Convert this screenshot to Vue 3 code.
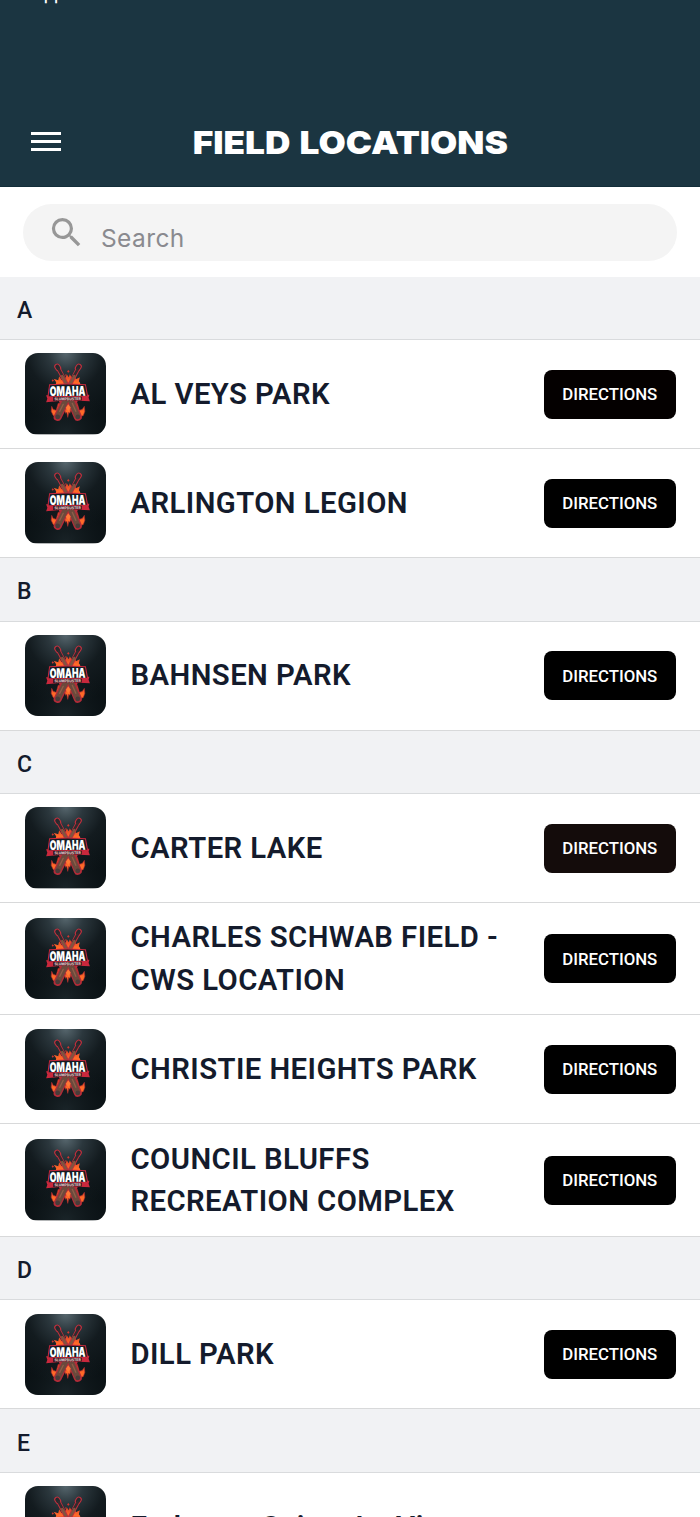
<script setup>
import { ref } from 'vue'

const search = ref('')

const sections = [
	{
		letter: 'A',
		fields: [{ name: 'AL VEYS PARK', tone: 'warm' }, { name: 'ARLINGTON LEGION' }],
	},
	{
		letter: 'B',
		fields: [{ name: 'BAHNSEN PARK' }],
	},
	{
		letter: 'C',
		fields: [
			{ name: 'CARTER LAKE', tone: 'pressed' },
			{ name: 'CHARLES SCHWAB FIELD - CWS LOCATION', tall: true },
			{ name: 'CHRISTIE HEIGHTS PARK' },
			{ name: 'COUNCIL BLUFFS RECREATION COMPLEX', tall: true },
		],
	},
	{
		letter: 'D',
		fields: [{ name: 'DILL PARK' }],
	},
	{
		letter: 'E',
		fields: [{ name: 'Embassy Suites La Vista', plain: true }],
	},
]
</script>

<template>
	<div class="screen">
		<header class="top-bar">
			<div class="status">App Screenshots</div>
			<div class="nav">
				<button class="menu" type="button" aria-label="Menu">
					<span></span>
					<span></span>
					<span></span>
				</button>
				<h1><span>FIELD LOCATIONS</span></h1>
			</div>
		</header>

		<div class="search-wrap">
			<label class="search">
				<svg viewBox="0 0 24 24">
					<path d="M15.5 14h-.79l-.28-.27A6.471 6.471 0 0 0 16 9.5 6.5 6.5 0 1 0 9.5 16c1.61 0 3.09-.59 4.23-1.57l.27.28v.79l5 4.99L20.49 19l-4.99-5zm-6 0C7.01 14 5 11.99 5 9.5S7.01 5 9.5 5 14 7.01 14 9.5 11.99 14 9.5 14z" />
				</svg>
				<input v-model="search" type="text" placeholder="Search" />
			</label>
		</div>

		<!-- shared artwork for every row thumbnail -->
		<svg class="defs" width="0" height="0">
			<defs>
				<radialGradient id="glow" cx="50%" cy="0%" r="85%">
					<stop offset="0" stop-color="#56666d" />
					<stop offset="0.25" stop-color="#2b373d" />
					<stop offset="0.55" stop-color="#131b1f" />
					<stop offset="1" stop-color="#0a1114" />
				</radialGradient>
				<radialGradient id="floor" cx="50%" cy="100%" r="60%">
					<stop offset="0" stop-color="#253136" stop-opacity="0.6" />
					<stop offset="1" stop-color="#10181c" stop-opacity="0" />
				</radialGradient>
				<linearGradient id="fire" x1="0" y1="0" x2="0" y2="1">
					<stop offset="0" stop-color="#d83c28" />
					<stop offset="0.6" stop-color="#ff6a28" />
				</linearGradient>
				<symbol id="logo" viewBox="0 0 81 81">
					<rect width="81" height="81" fill="url(#glow)" />
					<rect width="81" height="81" fill="url(#floor)" />
					<path d="M30 34l1-5-2.500-3.500 4.500 1.500 1-4 2.500 4 1.500-2 1.500 2 2-6 2 3 1-3 3 5 2-4.500 1 4.500 4-2-1 4 1.500 2-2 4z" fill="url(#fire)" />
					<path d="M27.500 26l1.300 1.300-1.300 1.200-1-1.200zM43 17l1.300 1.400-1.300 1.300-1.200-1.300zM40.500 21l.8.8-.8.8-.8-.8z" fill="#cf352f" />
					<path d="M33 50l-2 7-3-1-1.500-3-.5 5 2 4 3 2 6-4 2-4 1.500 4 1-1 1 5 1-5 1 1 1.500-4 2 4 6 4 4-2 1.500-4-.5-5-2 3-3 1-2-7z" fill="url(#fire)" stroke="#a3282e" stroke-width="0.6" />
					<g stroke-linecap="round" fill="none">
						<path d="M33.500 16L50 48M52.500 16L36 48" stroke="#c02f3d" stroke-width="4.400" />
						<path d="M32 13.500l1 1.500M53.500 13.500l-1 1.500" stroke="#c02f3d" stroke-width="6" />
						<path d="M46 48l6.500 15.500M40 48l-7.500 15.500" stroke="#b32b38" stroke-width="8" />
						<path d="M32 13.500l1 1.500M53.500 13.500l-1 1.500" stroke="#252a2e" stroke-width="3.800" />
						<path d="M33.500 16L38 24M52.500 16L48 24" stroke="#332a2d" stroke-width="2.600" />
						<path d="M37 23L48 44M49 23L38 44" stroke="#80543f" stroke-width="2.700" />
						<path d="M45.500 47l6.500 15.500M40.500 47L33 62.500" stroke="#6b493c" stroke-width="5.600" />
						<path d="M47 50l3.500 8M38 51l-3.500 7" stroke="#8e5f48" stroke-width="1.300" />
						<path d="M52.500 63.300v.2M32.500 63.300v.2" stroke="#4a3c3a" stroke-width="4.600" />
					</g>
					<path d="M43 51l2.500 3.500-2.500 3.500-2.500-3.500z" fill="#ff7a36" />
					<path d="M24 31l18-.8 18.500.8 2 10.500h1.500l-.8 3 1.300 3.500-22-1-21.500 2 1.200-3.500-1.200-3.500h1.500z" fill="#c9283c" />
					<path d="M24.800 32l17.200-.7 17.700.7 1.800 10.500-38 .5z" fill="#141b22" />
					<path d="M28 43.700l28.500-.2v3.700l-14-.3-14.500.8z" fill="#331820" />
					<g transform="rotate(-0.800 42 40)">
						<text class="logo-name" x="42.300" y="42.600" textLength="35.500" lengthAdjust="spacingAndGlyphs">OMAHA</text>
						<text class="logo-sub" x="42.300" y="46.900" textLength="26" lengthAdjust="spacingAndGlyphs">SLUMPBUSTER</text>
					</g>
				</symbol>
			</defs>
		</svg>

		<section v-for="section in sections" :key="section.letter">
			<h2 class="letter">{{ section.letter }}</h2>
			<div v-for="field in section.fields" :key="field.name" class="row" :class="{ tall: field.tall, plain: field.plain }">
				<svg class="thumb"><use href="#logo" /></svg>
				<p class="name">{{ field.name }}</p>
				<button v-if="!field.plain" class="directions" :class="field.tone" type="button">DIRECTIONS</button>
			</div>
		</section>
	</div>
</template>

<style>
body {
	margin: 0;
	overflow: hidden;
	background: #fff;
}
</style>

<style scoped>
.screen {
	width: 700px;
	height: 1517px;
	overflow: hidden;
	background: #fff;
	color: #141b2c;
	font-family: Roboto, 'Liberation Sans', sans-serif;
}

.screen *,
.screen *::before {
	box-sizing: border-box;
}

button {
	border: none;
	font-family: inherit;
}

.top-bar {
	display: flex;
	flex-direction: column;
	justify-content: space-between;
	height: 187px;
	background: #1b3541;
	border-bottom: 1px solid #122d39;
	overflow: hidden;
}

/* only the descenders stay visible above the bar */
.status {
	height: 20px;
	margin-top: -16.5px;
	padding-left: 32px;
	font: 500 16.5px/20px Inter, sans-serif;
	color: #fff;
}

.nav {
	display: grid;
	grid-template-columns: 92px 1fr 92px;
	align-items: center;
	height: 88px;
}

.menu {
	display: flex;
	flex-direction: column;
	gap: 5px;
	width: 30px;
	margin: -2px 0 0 31px;
	padding: 0;
	background: none;
}

.menu span {
	height: 3px;
	background: #fff;
}

h1 {
	margin: 2px 0 0;
	text-align: center;
	font: 900 32px/40px Inter, sans-serif;
	word-spacing: 2px;
	white-space: nowrap;
	color: #fff;
}

/* stretched to get the wide geometric look of the title */
h1 span {
	display: inline-block;
	transform: scaleX(1.1);
}

.search-wrap {
	height: 89.5px;
	padding: 16.5px 23px 16px;
}

.search {
	display: flex;
	height: 57px;
	padding-left: 24px;
	border-radius: 29px;
	background: #f4f4f4;
}

.search svg {
	flex: none;
	width: 39px;
	height: 39px;
	margin: 9px 15px 0 0;
	fill: #979797;
}

.search input {
	flex: 1;
	height: 57px;
	padding: 11px 0 0;
	border: none;
	outline: none;
	background: none;
	font: 400 24.5px Inter, sans-serif;
	letter-spacing: 0.4px;
}

.search input::placeholder {
	color: #8a8a8f;
}

.defs {
	display: block;
}

.letter {
	display: flex;
	align-items: center;
	height: 63.5px;
	margin: 0;
	padding: 5px 17px 0;
	border-bottom: 1.5px solid #d9dbdd;
	background: #f1f2f4;
	font-size: 23px;
	font-weight: 500;
}

.row {
	display: flex;
	align-items: center;
	height: 109px;
	padding: 0 24.5px;
	border-bottom: 1.5px solid #d8d9da;
}

.row.tall {
	height: 112.4px;
}

.thumb {
	flex: none;
	width: 81.5px;
	height: 81.5px;
	border-radius: 13px;
}

.logo-name {
	fill: #fff;
	font: 900 13.2px Inter, sans-serif;
	text-anchor: middle;
}

.logo-sub {
	fill: #e6cccc;
	font: 800 3.6px Inter, sans-serif;
	text-anchor: middle;
}

.name {
	flex: 1;
	margin: 0 30px 0 24.5px;
	font-size: 29.3px;
	line-height: 42.3px;
	font-weight: 600;
	letter-spacing: 0.43px;
}

.plain .name {
	letter-spacing: 0.6px;
}

.directions {
	flex: none;
	width: 131.5px;
	height: 49px;
	padding: 0;
	border-radius: 8px;
	background: #000;
	color: #fff;
	font-size: 16.8px;
	font-weight: 500;
}

.directions.warm {
	background: #040000;
}

.directions.pressed {
	background: #140c0b;
}
</style>
